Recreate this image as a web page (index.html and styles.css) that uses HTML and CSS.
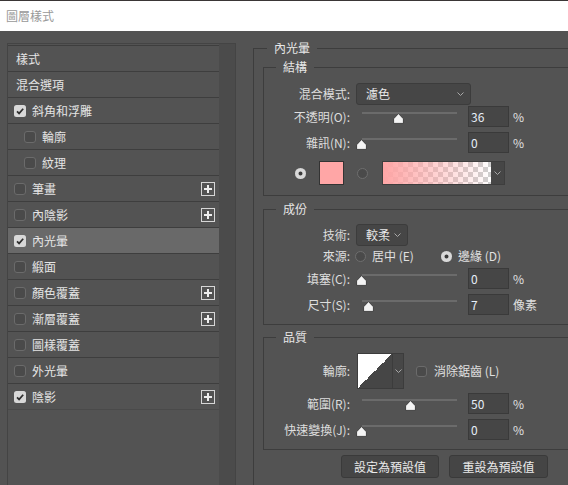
FILE: index.html
```html
<!DOCTYPE html>
<html lang="zh-Hant">
<head>
<meta charset="utf-8">
<title>圖層樣式</title>
<link rel="stylesheet" href="styles.css">
</head>
<body>
<div class="titlebar">圖層樣式</div>
<div class="dialog">
  <div class="styles">
    <div class="list">
      <div class="row plain">樣式</div>
      <div class="row plain">混合選項</div>
      <div class="row"><span class="cb on"><svg width="12" height="12" viewBox="0 0 12 12"><rect x="0" y="0" width="12" height="12" rx="2.5" fill="#d8d8d8"/><path d="M3 6.3 L5.1 8.4 L9.2 3.8" fill="none" stroke="#2e2e2e" stroke-width="1.7"/></svg></span>斜角和浮雕</div>
      <div class="row sub"><span class="cb off"></span>輪廓</div>
      <div class="row sub"><span class="cb off"></span>紋理</div>
      <div class="row"><span class="cb off"></span>筆畫<span class="plus"><svg width="14" height="14" viewBox="0 0 14 14"><rect x="0.5" y="0.5" width="13" height="13" fill="none" stroke="#d6d6d6"/><path d="M7 3 V11 M3 7 H11" stroke="#eeeeee" stroke-width="2"/></svg></span></div>
      <div class="row"><span class="cb off"></span>內陰影<span class="plus"><svg width="14" height="14" viewBox="0 0 14 14"><rect x="0.5" y="0.5" width="13" height="13" fill="none" stroke="#d6d6d6"/><path d="M7 3 V11 M3 7 H11" stroke="#eeeeee" stroke-width="2"/></svg></span></div>
      <div class="row sel"><span class="cb on"><svg width="12" height="12" viewBox="0 0 12 12"><rect x="0" y="0" width="12" height="12" rx="2.5" fill="#d8d8d8"/><path d="M3 6.3 L5.1 8.4 L9.2 3.8" fill="none" stroke="#2e2e2e" stroke-width="1.7"/></svg></span>內光暈</div>
      <div class="row"><span class="cb off"></span>緞面</div>
      <div class="row"><span class="cb off"></span>顏色覆蓋<span class="plus"><svg width="14" height="14" viewBox="0 0 14 14"><rect x="0.5" y="0.5" width="13" height="13" fill="none" stroke="#d6d6d6"/><path d="M7 3 V11 M3 7 H11" stroke="#eeeeee" stroke-width="2"/></svg></span></div>
      <div class="row"><span class="cb off"></span>漸層覆蓋<span class="plus"><svg width="14" height="14" viewBox="0 0 14 14"><rect x="0.5" y="0.5" width="13" height="13" fill="none" stroke="#d6d6d6"/><path d="M7 3 V11 M3 7 H11" stroke="#eeeeee" stroke-width="2"/></svg></span></div>
      <div class="row"><span class="cb off"></span>圖樣覆蓋</div>
      <div class="row"><span class="cb off"></span>外光暈</div>
      <div class="row last"><span class="cb on"><svg width="12" height="12" viewBox="0 0 12 12"><rect x="0" y="0" width="12" height="12" rx="2.5" fill="#d8d8d8"/><path d="M3 6.3 L5.1 8.4 L9.2 3.8" fill="none" stroke="#2e2e2e" stroke-width="1.7"/></svg></span>陰影<span class="plus"><svg width="14" height="14" viewBox="0 0 14 14"><rect x="0.5" y="0.5" width="13" height="13" fill="none" stroke="#d6d6d6"/><path d="M7 3 V11 M3 7 H11" stroke="#eeeeee" stroke-width="2"/></svg></span></div>
    </div>
    <div class="scroll"></div>
  </div>

  <div class="right">
    <fieldset class="outer">
      <legend class="lg-outer">內光暈</legend>

      <fieldset class="group g1">
        <legend>結構</legend>
        <div class="frow r-mode">
          <span class="lab">混合模式:</span>
          <div class="select w-mode"><span>濾色</span><svg class="chev" width="7" height="4" viewBox="0 0 7 4"><path d="M0.5 0.5 L3.5 3.5 L6.5 0.5" fill="none" stroke="#a8a8a8"/></svg></div>
        </div>
        <div class="frow r-sl">
          <span class="lab">不透明(O):</span>
          <div class="slider"><div class="track"></div><svg class="thumb" style="left:37px" width="11" height="11" viewBox="0 0 11 11"><path d="M5.5 0.6 L10.4 5.8 L10.4 10.4 L0.6 10.4 L0.6 5.8 Z" fill="#f4f4f4" stroke="#2a2a2a" stroke-width="0.8"/></svg></div>
          <div class="num">36</div><span class="unit">%</span>
        </div>
        <div class="frow r-sl gap5">
          <span class="lab">雜訊(N):</span>
          <div class="slider"><div class="track"></div><svg class="thumb" style="left:0px" width="11" height="11" viewBox="0 0 11 11"><path d="M5.5 0.6 L10.4 5.8 L10.4 10.4 L0.6 10.4 L0.6 5.8 Z" fill="#f4f4f4" stroke="#2a2a2a" stroke-width="0.8"/></svg></div>
          <div class="num">0</div><span class="unit">%</span>
        </div>
        <div class="frow r-sw">
          <span class="radio on"></span>
          <span class="swatch"></span>
          <span class="radio off r2"></span>
          <div class="gradpick"><span class="grad"></span><span class="garrow"><svg width="7" height="4" viewBox="0 0 7 4"><path d="M0.5 0.5 L3.5 3.5 L6.5 0.5" fill="none" stroke="#a8a8a8"/></svg></span></div>
        </div>
      </fieldset>

      <fieldset class="group g2">
        <legend>成份</legend>
        <div class="frow r-mode">
          <span class="lab">技術:</span>
          <div class="select w-tech"><span>較柔</span><svg class="chev" width="7" height="4" viewBox="0 0 7 4"><path d="M0.5 0.5 L3.5 3.5 L6.5 0.5" fill="none" stroke="#a8a8a8"/></svg></div>
        </div>
        <div class="frow r-src">
          <span class="lab">來源:</span>
          <span class="opt o1"><span class="radio off"></span>居中 (E)</span>
          <span class="opt"><span class="radio on"></span>邊緣 (D)</span>
        </div>
        <div class="frow r-sl gap3">
          <span class="lab">填塞(C):</span>
          <div class="slider"><div class="track"></div><svg class="thumb" style="left:0px" width="11" height="11" viewBox="0 0 11 11"><path d="M5.5 0.6 L10.4 5.8 L10.4 10.4 L0.6 10.4 L0.6 5.8 Z" fill="#f4f4f4" stroke="#2a2a2a" stroke-width="0.8"/></svg></div>
          <div class="num">0</div><span class="unit">%</span>
        </div>
        <div class="frow r-sl gap5">
          <span class="lab">尺寸(S):</span>
          <div class="slider"><div class="track"></div><svg class="thumb" style="left:7px" width="11" height="11" viewBox="0 0 11 11"><path d="M5.5 0.6 L10.4 5.8 L10.4 10.4 L0.6 10.4 L0.6 5.8 Z" fill="#f4f4f4" stroke="#2a2a2a" stroke-width="0.8"/></svg></div>
          <div class="num">7</div><span class="unit">像素</span>
        </div>
      </fieldset>

      <fieldset class="group g3">
        <legend>品質</legend>
        <div class="frow r-contour">
          <span class="lab">輪廓:</span>
          <div class="contour"><span class="curve"></span><span class="carrow"><svg width="7" height="4" viewBox="0 0 7 4"><path d="M0.5 0.5 L3.5 3.5 L6.5 0.5" fill="none" stroke="#a8a8a8"/></svg></span></div>
          <span class="cbx"></span><span class="cbl">消除鋸齒 (L)</span>
        </div>
        <div class="frow r-sl gap4">
          <span class="lab">範圍(R):</span>
          <div class="slider"><div class="track"></div><svg class="thumb" style="left:49px" width="11" height="11" viewBox="0 0 11 11"><path d="M5.5 0.6 L10.4 5.8 L10.4 10.4 L0.6 10.4 L0.6 5.8 Z" fill="#f4f4f4" stroke="#2a2a2a" stroke-width="0.8"/></svg></div>
          <div class="num">50</div><span class="unit">%</span>
        </div>
        <div class="frow r-sl gap5">
          <span class="lab">快速變換(J):</span>
          <div class="slider"><div class="track"></div><svg class="thumb" style="left:0px" width="11" height="11" viewBox="0 0 11 11"><path d="M5.5 0.6 L10.4 5.8 L10.4 10.4 L0.6 10.4 L0.6 5.8 Z" fill="#f4f4f4" stroke="#2a2a2a" stroke-width="0.8"/></svg></div>
          <div class="num">0</div><span class="unit">%</span>
        </div>
      </fieldset>

      <div class="buttons">
        <button class="btn b1">設定為預設值</button>
        <button class="btn b2">重設為預設值</button>
      </div>
    </fieldset>
  </div>
</div>
</body>
</html>
```
FILE: styles.css
```css
* { box-sizing: border-box; }
html, body { margin: 0; height: 485px; overflow: hidden; }
body {
  background: #535353;
  font-family: "Noto Sans CJK TC", "Noto Sans", sans-serif;
  font-size: 12px;
  line-height: 16px;
  color: #e4e4e4;
}
.titlebar {
  height: 31px;
  background: #ffffff;
  border-top: 1px solid #3a3636;
  color: #999999;
  padding-left: 6px;
  display: flex;
  align-items: center;
}
.dialog { display: flex; align-items: flex-start; }

/* left style list */
.styles {
  margin: 12px 0 0 7px;
  width: 229px;
  height: 460px;
  flex: none;
  border: 1px solid #444444;
  border-bottom: none;
  display: flex;
}
.list { width: 211px; padding-top: 1px; }
.scroll { width: 16px; background: #4b4b4b; }
.row {
  height: 26px;
  border-top: 1px solid #3e3e3e;
  display: flex;
  align-items: center;
  padding-left: 6px;
}
.row.last { height: 27px; border-bottom: 1px solid #4a4a4a; }
.row.plain { padding-left: 8px; }
.row.sub { padding-left: 16px; }
.row.sel { background: #696969; }
.cb { width: 12px; height: 12px; margin-right: 6px; flex: none; display: block; }
.cb svg { display: block; }
.cb.off { border: 1.5px solid #6b6b6b; border-radius: 3px; background: #4a4a4a; }
.plus { margin-left: auto; margin-right: 4px; width: 14px; height: 14px; }
.plus svg { display: block; }

/* right panel */
.right { margin: 8px 0 0 17px; width: 340px; flex: none; }
fieldset { margin: 0; padding: 0; border: 1px solid #3d3d3d; min-width: 0; }
legend { padding: 0 7px; height: 18px; line-height: 18px; margin-left: 12px; color: #e6e6e6; }
.outer { width: 340px; height: 470px; border-bottom: none; }
.lg-outer { margin-left: 13px; }
.group { margin-left: 9px; width: 320px; }
.g1 { margin-top: 1px; padding: 7px 0 10px; }
.g2 { margin-top: 4px; padding: 6px 0 9px; }
.g3 { margin-top: 3px; padding: 7px 0 9px; }

.frow { display: flex; align-items: center; }
.lab { width: 86px; margin-right: 6px; text-align: right; flex: none; color: #dedede; white-space: nowrap; }
.r-mode { height: 22px; }
.r-sl { height: 21px; }
.g1 .r-sl:first-of-type { margin-top: 1px; }
.g1 .r-mode + .r-sl { margin-top: 1px; }
.gap3 { margin-top: 3px; }
.gap4 { margin-top: 4px; }
.gap5 { margin-top: 5px; }

.select {
  height: 22px;
  background: #464646;
  border: 1px solid #3c3c3c;
  border-radius: 3px;
  display: flex;
  align-items: center;
  padding-left: 9px;
  padding-right: 6px;
  color: #e8e8e8;
}
.select .chev { margin-left: auto; }
.w-mode { width: 115px; }
.w-tech { width: 52px; }

.slider { position: relative; width: 112px; height: 21px; flex: none; }
.track { position: absolute; left: 6px; top: 6px; width: 95px; height: 2px; background: #6b6b6b; }
.thumb { position: absolute; top: 7px; display: block; }
.num {
  width: 41px;
  height: 21px;
  background: #464646;
  border: 1px solid #3a3a3a;
  padding-left: 2px;
  line-height: 19px;
  color: #e6eef8;
  flex: none;
}
.unit { margin-left: 4px; color: #e0e0e0; }

.r-sw { height: 24px; margin-top: 8px; padding-left: 31px; }
.radio { width: 11px; height: 11px; border-radius: 50%; flex: none; display: block; }
.radio.on { background: #d9d9d9; box-shadow: inset 0 0 0 3.5px #d9d9d9, inset 0 0 0 6px #3a3a3a; }
.radio.off { border: 1px solid #6e6e6e; background: #4a4a4a; }
.swatch { width: 25px; height: 24px; margin-left: 13px; background: #ffa6a6; border: 1px solid #333333; flex: none; }
.r2 { margin-left: 13px; }
.gradpick { margin-left: 14px; width: 123px; height: 24px; display: flex; border: 1px solid #3e3e3e; flex: none; }
.grad {
  flex: 1;
  background:
    linear-gradient(to right, #ffa6a6, rgba(255, 166, 166, 0)),
    repeating-conic-gradient(#cfcfcf 0 25%, #ffffff 0 50%) 0 0 / 10px 10px;
}
.garrow { width: 13px; background: #464646; display: flex; align-items: center; justify-content: center; }
.garrow svg, .carrow svg { display: block; }

.r-src { height: 18px; margin-top: 1px; }
.opt { display: flex; align-items: center; color: #e0e0e0; }
.opt .radio { margin-right: 6px; }
.o1 { width: 86px; margin-left: -1px; }

.r-contour { height: 36px; }
.contour { margin-left: 1px; width: 47px; height: 36px; border: 1px solid #3c3c3c; display: flex; flex: none; }
.curve { width: 34px; background: linear-gradient(to bottom right, #ffffff 50%, #464646 50%); }
.carrow { flex: 1; border-left: 1px solid #3c3c3c; background: #474747; display: flex; align-items: center; justify-content: center; }
.cbx { width: 11px; height: 11px; margin-left: 12px; border: 1.5px solid #6b6b6b; border-radius: 3px; background: #4a4a4a; flex: none; }
.cbl { margin-left: 7px; color: #e0e0e0; }

.buttons { display: flex; margin-top: 5px; padding-left: 87px; }
.btn {
  height: 23px;
  background: #454545;
  border: 1px solid #3a3a3a;
  border-radius: 3px;
  color: #eaeaea;
  font-family: inherit;
  font-size: 12px;
  line-height: 16px;
  padding: 0;
}
.b1 { width: 98px; }
.b2 { width: 99px; margin-left: 10px; }
```
